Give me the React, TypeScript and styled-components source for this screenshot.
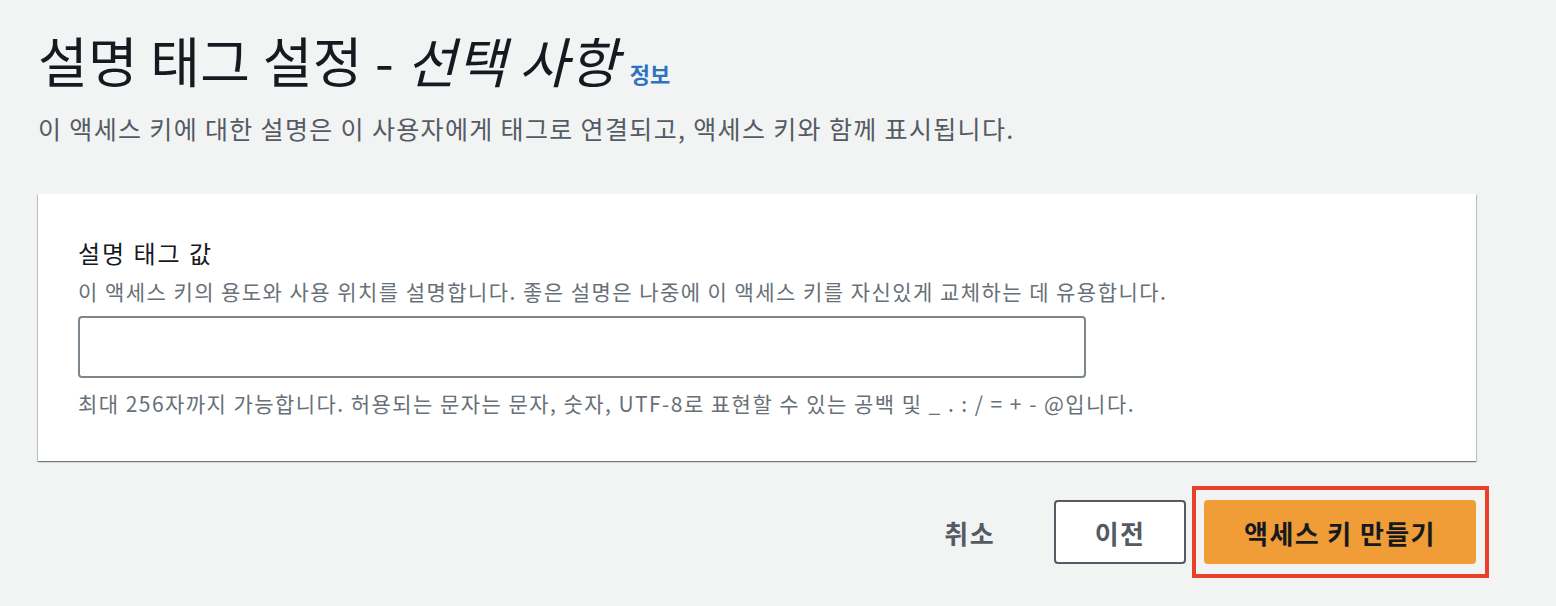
import * as React from 'react';
import styled, { createGlobalStyle } from 'styled-components';

const GlobalStyle = createGlobalStyle`
  html, body {
    margin: 0;
    padding: 0;
    background: #f2f3f3;
  }
  body {
    font-family: 'Noto Sans CJK KR', 'Noto Sans', sans-serif;
    color: #16191f;
  }
`;

const Page = styled.div`
  box-sizing: border-box;
  width: 1556px;
  height: 606px;
  padding: 25px 80px 0 38px;
  display: flex;
  flex-direction: column;
`;

const Heading = styled.h1`
  margin: 0;
  display: flex;
  align-items: baseline;
  gap: 11px;
  font-size: 54px;
  font-weight: 400;
  line-height: 70px;
  letter-spacing: 0.3px;
  color: #16191f;
`;

const Optional = styled.em`
  font-style: italic;
`;

const InfoLink = styled.a`
  font-size: 22px;
  font-weight: 700;
  letter-spacing: 0;
  color: #2f73c0;
  text-decoration: none;
`;

const Lead = styled.p`
  margin: 3px 0 0;
  font-size: 25px;
  line-height: 34px;
  letter-spacing: 1.35px;
  color: #545b64;
`;

const Card = styled.section`
  margin-top: 49px;
  box-sizing: border-box;
  height: 267px;
  padding: 43px 40px 0;
  background: #fff;
  box-shadow: 0 1px 1px 0 rgba(0, 28, 36, 0.35), 1px 1px 1px 0 rgba(0, 28, 36, 0.18),
    -1px 1px 1px 0 rgba(0, 28, 36, 0.18);
`;

const Label = styled.label`
  display: block;
  font-size: 24px;
  line-height: 32px;
  letter-spacing: 2px;
  color: #16191f;
`;

const Hint = styled.div`
  margin-top: 7px;
  font-size: 21px;
  line-height: 30px;
  letter-spacing: 1.45px;
  color: #687078;
`;

const Field = styled.input`
  display: block;
  box-sizing: border-box;
  width: 1008px;
  height: 62px;
  margin: 10px 0 0;
  border: 2px solid #7d868c;
  border-radius: 4px;
  background: #fff;
  outline: none;
`;

const Constraint = styled(Hint)`
  margin-top: 10px;
`;

const Actions = styled.div`
  margin-top: 25px;
  display: flex;
  align-items: center;
  justify-content: flex-end;
`;

const TextButton = styled.button`
  border: none;
  background: none;
  padding: 0;
  margin-right: 59px;
  font-family: inherit;
  font-size: 26px;
  font-weight: 700;
  letter-spacing: 1.4px;
  color: #545b64;
`;

const Button = styled.button<{ $primary?: boolean }>`
  box-sizing: border-box;
  height: 64px;
  width: ${({ $primary }) => ($primary ? '272px' : '132px')};
  padding: 0;
  border: 2px solid ${({ $primary }) => ($primary ? '#f09d38' : '#545b64')};
  border-radius: 4px;
  background: ${({ $primary }) => ($primary ? '#f09d38' : '#fff')};
  font-family: inherit;
  font-size: 26px;
  font-weight: 700;
  letter-spacing: 1.4px;
  color: ${({ $primary }) => ($primary ? '#16191f' : '#545b64')};
`;

const Highlight = styled.div`
  margin-left: 6px;
  margin-right: -13px;
  padding: 10px 9px 10px 8px;
  border: 4px solid #e8402a;
`;

export default function App() {
  return (
    <Page>
      <GlobalStyle />
      <Heading>
        <span>
          설명 태그 설정 - <Optional>선택 사항</Optional>
        </span>
        <InfoLink href="#">정보</InfoLink>
      </Heading>
      <Lead>이 액세스 키에 대한 설명은 이 사용자에게 태그로 연결되고, 액세스 키와 함께 표시됩니다.</Lead>
      <Card>
        <Label htmlFor="desc-tag">설명 태그 값</Label>
        <Hint>
          이 액세스 키의 용도와 사용 위치를 설명합니다. 좋은 설명은 나중에 이 액세스 키를 자신있게 교체하는 데 유용합니다.
        </Hint>
        <Field id="desc-tag" type="text" />
        <Constraint>
          최대 256자까지 가능합니다. 허용되는 문자는 문자, 숫자, UTF-8로 표현할 수 있는 공백 및 _ . : / = + - @입니다.
        </Constraint>
      </Card>
      <Actions>
        <TextButton>취소</TextButton>
        <Button>이전</Button>
        <Highlight>
          <Button $primary>액세스 키 만들기</Button>
        </Highlight>
      </Actions>
    </Page>
  );
}
